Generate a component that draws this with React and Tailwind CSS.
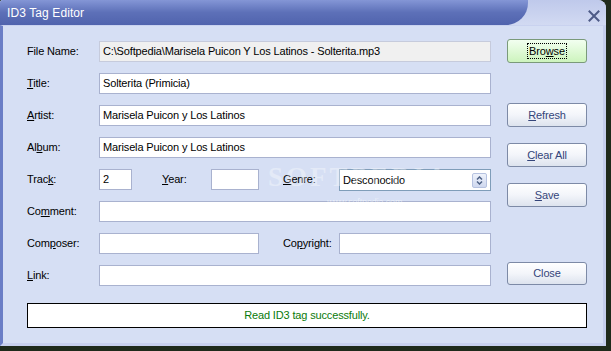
import React from "react";

function U({ children }) {
  return <span className="underline underline-offset-[1px]">{children}</span>;
}

function Label({ children, w = "w-[72px]" }) {
  return <div className={`${w} shrink-0 text-black leading-none`}>{children}</div>;
}

function Input({ value, w = "flex-1", disabled }) {
  return (
    <div
      className={`${w} h-[21px] flex items-center pl-[3px] border ${
        disabled ? "bg-[#f0f0f0] border-[#c6cbdc]" : "bg-white border-[#a9b2cf]"
      } text-black whitespace-nowrap overflow-hidden`}
    >
      {value}
    </div>
  );
}

function Btn({ children, h = "h-[24px]", green, focus }) {
  return (
    <div
      className={`w-[80px] ${h} rounded-[3px] border flex items-center justify-center ${
        green
          ? "border-[#7a9a7a] bg-gradient-to-b from-[#f2fff0] to-[#cdf4bd] text-black"
          : "border-[#7d8aa6] bg-gradient-to-b from-[#ffffff] via-[#f3f5fa] to-[#dde3ee] text-[#34457a]"
      }`}
    >
      {focus ? (
        <span className="border border-dotted border-black px-[1px] leading-[14px]">{children}</span>
      ) : (
        children
      )}
    </div>
  );
}

function Row({ children }) {
  return <div className="h-[21px] flex items-center">{children}</div>;
}

export default function App() {
  return (
    <div className="w-[611px] h-[351px] bg-[#1f2a1b] overflow-hidden relative font-['Liberation_Sans',Arial,sans-serif] text-[11px] tracking-[-0.15px]">
      <div className="w-[606px] h-[346px] flex flex-col rounded-tr-[8px] rounded-tl-[3px] overflow-hidden bg-[#d6dff4]">
        {/* Title bar */}
        <div className="h-[25px] flex bg-gradient-to-b from-[#bfc9eb] to-[#d2daf2] shrink-0">
          <div className="w-[528px] rounded-br-[22px] bg-gradient-to-b from-[#8496d6] via-[#5d70b8] to-[#5063ad] flex items-center pl-[7px] pt-[1px]">
            <span className="text-white text-[12px] leading-none tracking-[0.1px]">ID3 Tag Editor</span>
          </div>
          <div className="flex-1 flex items-center justify-end pr-[6px]">
            <svg width="12" height="12" viewBox="0 0 12 12" className="mt-[6px]">
              <path d="M1.5 1.5 L10.5 10.5 M10.5 1.5 L1.5 10.5" stroke="#4d5a86" strokeWidth="2" strokeLinecap="square" />
            </svg>
          </div>
        </div>
        {/* Body */}
        <div className="flex-1 flex flex-col border-l-[3px] border-l-[#6b7ec6] border-r-[3px] border-r-[#c5ceec] border-b-[3px] border-b-[#c8d0ee] border-t border-t-[#c9d2ef] pl-[24px] pr-[16px] pt-[13px]">
          <div className="flex">
            <div className="w-[464px] mt-[2px] flex flex-col gap-[11px]">
              <Row>
                <Label>File Name:</Label>
                <Input disabled value="C:\Softpedia\Marisela Puicon Y Los Latinos - Solterita.mp3" />
              </Row>
              <Row>
                <Label>
                  <U>T</U>itle:
                </Label>
                <Input value="Solterita (Primicia)" />
              </Row>
              <Row>
                <Label>
                  <U>A</U>rtist:
                </Label>
                <Input value="Marisela Puicon y Los Latinos" />
              </Row>
              <Row>
                <Label>
                  Al<U>b</U>um:
                </Label>
                <Input value="Marisela Puicon y Los Latinos" />
              </Row>
              <Row>
                <Label>
                  Trac<U>k</U>:
                </Label>
                <Input w="w-[33px]" value="2" />
                <div className="w-[30px]" />
                <Label w="w-[49px]">
                  <U>Y</U>ear:
                </Label>
                <Input w="w-[48px]" value="" />
                <div className="w-[24px]" />
                <Label w="w-[56px]">
                  <U>G</U>enre:
                </Label>
                <div className="flex-1 h-[22px] mt-[1px] border border-[#7f9db9] bg-white flex items-center pl-[3px] pr-[3px]">
                  <span className="flex-1 text-black">Desconocido</span>
                  <div className="w-[15px] h-[15px] rounded-[2px] border border-[#b6c2e0] bg-gradient-to-b from-[#eef2fb] to-[#cfd8ef] flex items-center justify-center">
                    <svg width="7" height="9" viewBox="0 0 7 9">
                      <path d="M1 3.5 L3.5 1 L6 3.5 M1 5.5 L3.5 8 L6 5.5" fill="none" stroke="#4d6185" strokeWidth="1.5" />
                    </svg>
                  </div>
                </div>
              </Row>
              <Row>
                <Label>
                  Co<U>m</U>ment:
                </Label>
                <Input value="" />
              </Row>
              <Row>
                <Label>
                  Com<U>p</U>oser:
                </Label>
                <Input w="w-[160px]" value="" />
                <div className="w-[24px]" />
                <Label w="w-[56px]">
                  Co<U>p</U>yright:
                </Label>
                <Input value="" />
              </Row>
              <Row>
                <Label>
                  <U>L</U>ink:
                </Label>
                <Input value="" />
              </Row>
            </div>
            <div className="ml-[16px] flex flex-col">
              <Btn green focus>
                <span>
                  Bro<U>w</U>se
                </span>
              </Btn>
              <div className="h-[40px]" />
              <Btn>
                <span>
                  <U>R</U>efresh
                </span>
              </Btn>
              <div className="h-[16px]" />
              <Btn>
                <span>
                  <U>C</U>lear All
                </span>
              </Btn>
              <div className="h-[16px]" />
              <Btn>
                <span>
                  <U>S</U>ave
                </span>
              </Btn>
              <div className="h-[55px]" />
              <Btn h="h-[23px]">Close</Btn>
            </div>
          </div>
          <div className="mt-[17px] h-[25px] border border-black bg-white flex items-center justify-center text-[#0a7a0a]">
            Read ID3 tag successfully.
          </div>
        </div>
      </div>
      {/* watermark */}
      <div className="absolute left-[268px] top-[164px] pointer-events-none select-none flex flex-col items-center">
        <span className="font-['Liberation_Serif',serif] text-[27px] leading-none tracking-[3px] text-white/35 font-bold">SOFTPEDIA</span>
        <span className="text-[9px] leading-none mt-[7px] text-white/50 ml-[12px]">www.softpedia.com</span>
      </div>
    </div>
  );
}
